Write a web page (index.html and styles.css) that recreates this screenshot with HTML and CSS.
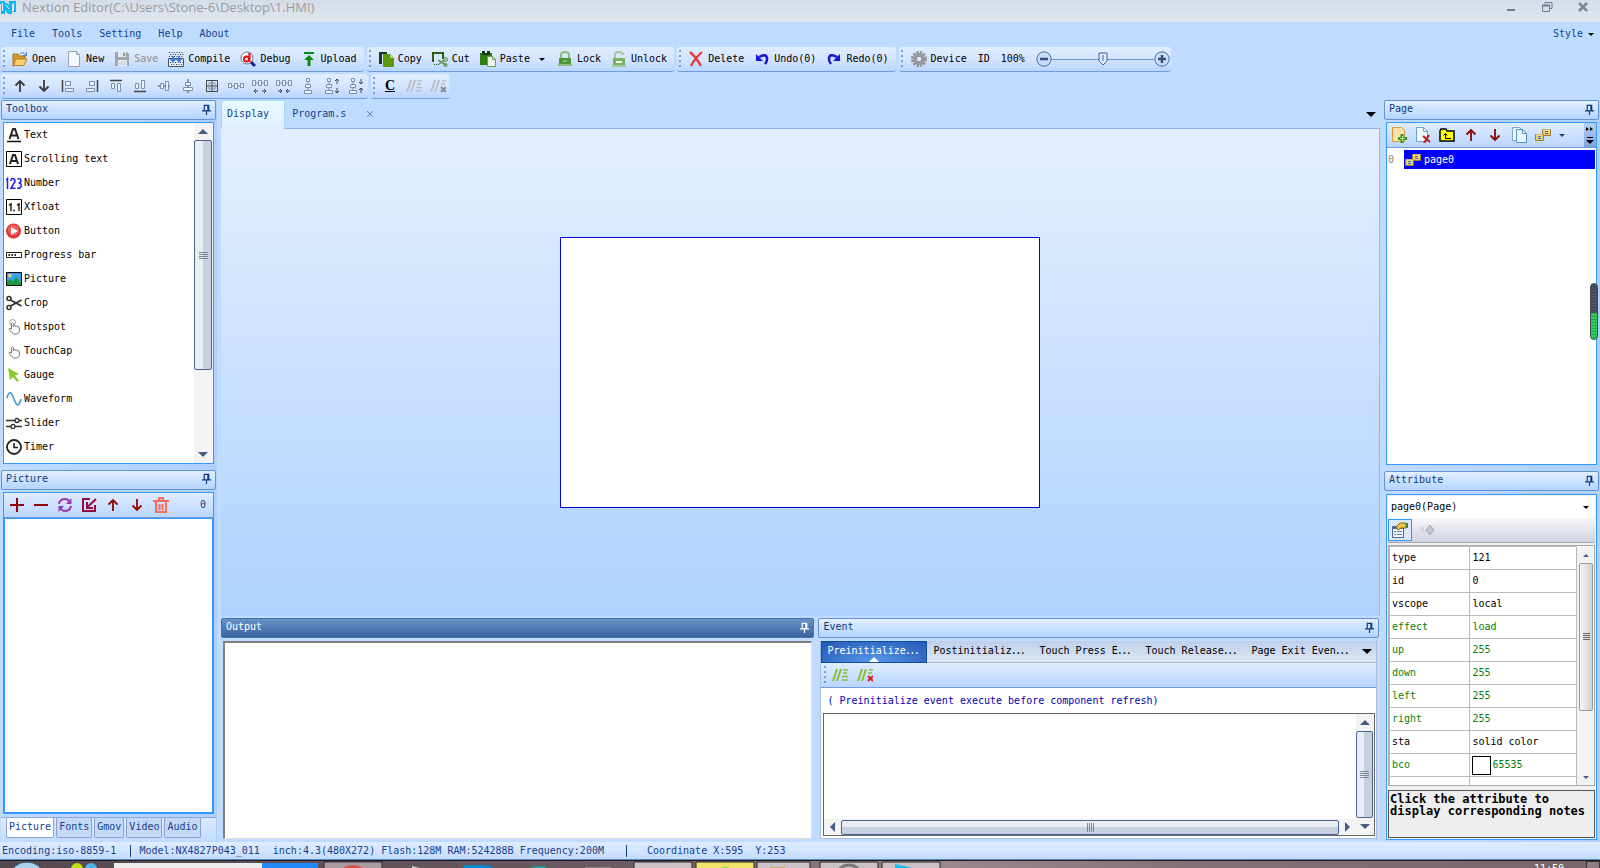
FILE: index.html
```html
<!DOCTYPE html>
<html lang="en">
<head>
<meta charset="utf-8">
<title>Nextion Editor</title>
<link rel="stylesheet" href="styles.css">
</head>
<body>
<svg class="defs" aria-hidden="true">
  <symbol id="pin" viewBox="0 0 10 12"><path d="M2.500 7V1.500h5V7M0 7.500h10M5 8v4M6.500 1v6" fill="none" stroke="currentColor" stroke-width="1.300"/></symbol>
  <symbol id="up" viewBox="0 0 16 16"><path d="M8 14V3M3.500 7.500 8 3l4.500 4.500" fill="none" stroke="currentColor" stroke-width="1.800"/></symbol>
  <symbol id="down" viewBox="0 0 16 16"><path d="M8 2v11M3.500 8.500 8 13l4.500-4.500" fill="none" stroke="currentColor" stroke-width="1.800"/></symbol>
  <symbol id="note" viewBox="0 0 16 16"><path d="M1 14 5 2M5 14 9 2" fill="none" stroke="currentColor" stroke-width="2"/><path d="M11 3h5M11 6h4M10 9.500h6M10 13h6" stroke="currentColor" stroke-width="1.500"/></symbol>
  <symbol id="unnote" viewBox="0 0 16 16"><path d="M1 14 5 2M5 14 9 2" fill="none" stroke="currentColor" stroke-width="2"/><path d="M12 3h4M11 6h4" stroke="currentColor" stroke-width="1.500"/><path d="m11 9 5 5m0-5-5 5" stroke="var(--x)" stroke-width="2"/></symbol>
  <symbol id="links" viewBox="0 0 16 16"><path d="M7.500 2.500h8v6h-8zM.5 7.500h8v6h-8z" fill="#ecd06a" stroke="#9a7d34"/><path d="M10 4.500h3M10 6.500h3M3 9.500h3M3 11.500h3" stroke="#3e6db5"/><path d="M8 3h7M1 8h7" stroke="#fbf0b8"/></symbol>
  <symbol id="hand" viewBox="0 0 16 16"><path d="M5.500 10V4.500q1-1.500 2 0V8V7q1.200-1 2 0v1V7.300q1.200-1 2 0v1V8q1.500-1 2 .5V12q-.5 3-3.500 3H7.500Q5.500 14 3 10q.5-1.500 2.500 0" fill="#fff" stroke="#777"/></symbol>
</svg>

<div class="app">
  <header class="titlebar">
    <svg class="logo" viewBox="0 0 16 16"><path d="M0 1h5v2h2l2 2V1h7v11h-3V4h-1v10H8l-3-4v4H1V4H0z" fill="#14b4f4"/><path d="M2.500 3v8M13.500 3v8M5.500 4.500 9 9" stroke="#dff4ff"/></svg>
    <h1>Nextion Editor(C:\Users\Stone-6\Desktop\1.HMI)</h1>
    <div class="winbtns">
      <button aria-label="Minimize"><svg viewBox="0 0 12 12"><path d="M2 9h8" stroke="#6b7d95" stroke-width="2"/></svg></button>
      <button aria-label="Restore"><svg viewBox="0 0 12 12"><path d="M4 3V1.500h7v6H9M1.500 4.500h7v6h-7z" fill="none" stroke="#6b7d95"/><path d="M1 4.500h8" stroke="#6b7d95" stroke-width="2"/></svg></button>
      <button aria-label="Close"><svg viewBox="0 0 12 12"><path d="m2 2 8 8m0-8-8 8" stroke="#76869b" stroke-width="2.500"/></svg></button>
    </div>
  </header>

  <nav class="menu">
    <button>File</button><button>Tools</button><button>Setting</button><button>Help</button><button>About</button>
    <button class="style">Style <i class="caret"></i></button>
  </nav>

  <div class="bars">
    <div class="bar">
      <i class="grip"></i>
      <button><svg viewBox="0 0 16 16"><path d="M1 3h5l1 2h6v3H5L2 15H1z" fill="#d99a2b" stroke="#a8731c"/><path d="M4 8h11l-3 6.500H1.500z" fill="#f8cf6c" stroke="#b9842a"/><path d="M8 3q3-3 6 1M14.500 1v3.500H11" fill="none" stroke="#5a7fa8"/></svg>Open</button>
      <button><svg viewBox="0 0 16 16"><path d="M2.500.5h8l3 3v12h-11z" fill="#f4f7fc" stroke="#9aa3b4"/><path d="M10.500.5v3h3" fill="#c9d3e6" stroke="#9aa3b4"/></svg>New</button>
      <button disabled><svg viewBox="0 0 16 16"><path d="M1 1h12l2 2v12H1z" fill="#a3a5a8"/><path d="M4 1h8v5H4zM4 9h9v6H4z" fill="#e4ebf5"/><path d="M9 2h2v3H9zM5 11h7M5 13h7" fill="#999" stroke="#aaa" stroke-width=".5"/></svg>Save</button>
      <button><svg viewBox="0 0 16 16"><path d="M.5 7.500h15v8H.5z" fill="#edf3fc" stroke="#456"/><path d="M1 1.500h14M2 3.500h14M1 5.500h14M2 11.500h13M3 13.500h12" stroke="#333b4c" stroke-dasharray="1 1.500"/><path d="M5 5v5M11 5v5M2.500 8 5 10.500 7.500 8M8.500 8l2.500 2.500L13.500 8" fill="none" stroke="#2874dc" stroke-width="1.500"/></svg>Compile</button>
      <button><svg viewBox="0 0 16 16"><circle cx="7" cy="7" r="6" fill="#fff" stroke="#68798e"/><path d="m11 11 4 4" stroke="#1a1a8c" stroke-width="3"/><circle cx="6.500" cy="8" r="2.500" fill="none" stroke="#e31212" stroke-width="2"/><path d="M9.500 2v9" stroke="#e31212" stroke-width="2.200"/></svg>Debug</button>
      <button><svg viewBox="0 0 16 16"><path d="M3 1h10v2H3zM8 4l5 5H9.500v6h-3V9H3z" fill="#078a0e"/></svg>Upload</button>
    </div>
    <div class="bar">
      <i class="grip"></i>
      <button><svg viewBox="0 0 16 16"><path d="M1 1h8v2H4v10H1z" fill="#123f24"/><path d="M5 3h7l4 4v9H5z" fill="#5c9a0b"/><path d="M12 3v4h4" fill="#b4d67b"/></svg>Copy</button>
      <button><svg viewBox="0 0 16 16"><path d="M1 11V2h10v6" fill="none" stroke="#285e13" stroke-width="2"/><path d="M2 13.500h5" stroke="#285e13" stroke-dasharray="1 1"/><path d="m6 9 8 5M14 8l-7 5" stroke="#65965a" stroke-width="1.500"/><circle cx="13.500" cy="8.500" r="2" fill="none" stroke="#50923d"/><circle cx="13.500" cy="14" r="1.500" fill="none" stroke="#50923d"/></svg>Cut</button>
      <button><svg viewBox="0 0 16 16"><path d="M0 2h12v12H0z" fill="#2e7f0d"/><path d="M2 0h8v4H2z" fill="#0d3b1b"/><path d="M5 0h2v2H5z" fill="#dce9ff"/><path d="M7.500 5.500h5l3 3v7h-8z" fill="#eff6ef" stroke="#6aa24e"/><path d="M12.500 5.500v3h3" fill="none" stroke="#6aa24e"/></svg>Paste</button><button class="drop" aria-label="Paste options"><i class="caret"></i></button>
      <button><svg viewBox="0 0 16 16"><path d="M4 8V4q0-3 4-3t4 3v4" fill="none" stroke="#8dbc7d" stroke-width="2"/><path d="M2 7h12v6H2z" fill="#4d9836"/><path d="M1 14h14" stroke="#91bc83" stroke-width="2"/><path d="M6 10h4" stroke="#a6d190"/></svg>Lock</button>
      <button><svg viewBox="0 0 16 16"><path d="M4 8V4q0-3 4-3t4 3" fill="none" stroke="#a6c99c" stroke-width="2"/><path d="M2 7h12v8H2z" fill="#76b35e"/><path d="M5 11h6" stroke="#fff" stroke-width="2"/><path d="M1 15h14" stroke="#a3c996" stroke-width="2"/></svg>Unlock</button>
    </div>
    <div class="bar">
      <i class="grip"></i>
      <button><svg viewBox="0 0 16 16"><path d="M2 1q6 5 11 14M14 1Q7 7 3 15" fill="none" stroke="#e23732" stroke-width="2.300"/></svg>Delete</button>
      <button><svg viewBox="0 0 16 16"><path d="M5 6q7-4 8 1 .5 3-2 6" fill="none" stroke="#1515dc" stroke-width="2.500"/><path d="M2 3v7h7z" fill="#1515dc"/></svg>Undo(0)</button>
      <button><svg viewBox="0 0 16 16"><path d="M11 6Q4 2 3 7q-.5 3 2 6" fill="none" stroke="#1515dc" stroke-width="2.500"/><path d="M14 3v7H7z" fill="#1515dc"/></svg>Redo(0)</button>
    </div>
    <div class="bar zoombar">
      <i class="grip"></i>
      <button><svg viewBox="0 0 16 16"><circle cx="8" cy="8" r="6.500" fill="none" stroke="#8d8f93" stroke-width="3" stroke-dasharray="2.200 1.200"/><circle cx="8" cy="8" r="4" fill="none" stroke="#96999d" stroke-width="4"/><circle cx="8" cy="8" r="2" fill="#e5eaf1"/></svg>Device</button>
      <button>ID</button>
      <label for="zoom">100%</label>
      <button class="round" aria-label="Zoom out"><svg viewBox="0 0 16 16"><circle cx="8" cy="8" r="7.200" fill="#c9dcf5" stroke="#4a6d9c"/><path d="M4 8h8" stroke="#34527d" stroke-width="2.500"/></svg></button><input id="zoom" type="range" min="0" max="200" value="100"><button class="round" aria-label="Zoom in"><svg viewBox="0 0 16 16"><circle cx="8" cy="8" r="7.200" fill="#c9dcf5" stroke="#4a6d9c"/><path d="M4 8h8M8 4v8" stroke="#34527d" stroke-width="2.500"/></svg></button>
    </div>
  </div>

  <div class="bars">
    <div class="bar tight">
      <i class="grip"></i>
      <button aria-label="Bring forward"><svg><use href="#up"/></svg></button>
      <button aria-label="Send backward"><svg><use href="#down"/></svg></button>
      <button aria-label="Align left"><svg viewBox="0 0 16 16"><path d="M2.500 2v12" stroke="#444" stroke-width="1.500"/><path d="M5.500 3.500h5v4h-5zM5.500 10.500h8v3h-8z" fill="#e8f1ff" stroke="#8090a8"/></svg></button>
      <button aria-label="Align right"><svg viewBox="0 0 16 16"><path d="M13.500 2v12" stroke="#444" stroke-width="1.500"/><path d="M5.500 3.500h5v4h-5zM2.500 10.500h8v3h-8z" fill="#e8f1ff" stroke="#8090a8"/></svg></button>
      <button aria-label="Align top"><svg viewBox="0 0 16 16"><path d="M2 2.500h12" stroke="#444" stroke-width="1.500"/><path d="M3.500 5.500h3v5h-3zM9.500 5.500h3v8h-3z" fill="#e8f1ff" stroke="#8090a8"/></svg></button>
      <button aria-label="Align bottom"><svg viewBox="0 0 16 16"><path d="M2 13.500h12" stroke="#444" stroke-width="1.500"/><path d="M3.500 5.500h3v5h-3zM9.500 2.500h3v8h-3z" fill="#e8f1ff" stroke="#8090a8"/></svg></button>
      <button aria-label="Align middle"><svg viewBox="0 0 16 16"><path d="M2 8h12" stroke="#444"/><path d="M4.500 5.500h3v5h-3zM9.500 3.500h3v9h-3z" fill="#e8f1ff" stroke="#8090a8"/></svg></button>
      <button aria-label="Align center"><svg viewBox="0 0 16 16"><path d="M8 1v14" stroke="#444"/><path d="M5.500 4.500h5v3h-5zM3.500 9.500h9v3h-9z" fill="#e8f1ff" stroke="#8090a8"/></svg></button>
      <button aria-label="Center in page"><svg viewBox="0 0 16 16"><path d="M2.500 2.500h11v11h-11zM8 2v12M2 8h12" fill="none" stroke="#444"/><path d="M5 5h6v6H5z" fill="none" stroke="#8090a8"/></svg></button>
      <button aria-label="Distribute horizontally"><svg viewBox="0 0 16 16"><path d="M0 8h16" stroke="#8090a8"/><path d="M.5 5.500h3v4h-3zM6.500 5.500h3v5h-3zM12.500 5.500h3v4h-3z" fill="#e8f1ff" stroke="#8090a8"/></svg></button>
      <button aria-label="Increase horizontal spacing"><svg viewBox="0 0 16 16"><path d="M0 5h16" stroke="#8090a8"/><path d="M.5 2.500h3v5h-3zM6.500 2.500h3v5h-3zM12.500 2.500h3v5h-3z" fill="#e8f1ff" stroke="#8090a8"/><path d="M2 13h4M10 13h4M4 11l-2 2 2 2M12 11l2 2-2 2" fill="none" stroke="#444"/></svg></button>
      <button aria-label="Decrease horizontal spacing"><svg viewBox="0 0 16 16"><path d="M0 5h16" stroke="#8090a8"/><path d="M.5 2.500h3v5h-3zM6.500 2.500h3v5h-3zM12.500 2.500h3v5h-3z" fill="#e8f1ff" stroke="#8090a8"/><path d="M2 13h4M10 13h4M4 11l2 2-2 2M12 11l-2 2 2 2" fill="none" stroke="#444"/></svg></button>
      <button aria-label="Distribute vertically"><svg viewBox="0 0 16 16"><path d="M8 0v16" stroke="#8090a8"/><path d="M6.500.5h3v3h-3zM5.500 6.500h5v3h-5zM4.500 12.500h7v3h-7z" fill="#e8f1ff" stroke="#8090a8"/></svg></button>
      <button aria-label="Increase vertical spacing"><svg viewBox="0 0 16 16"><path d="M5 0v16" stroke="#8090a8"/><path d="M3.500.5h3v3h-3zM2.500 6.500h5v3h-5zM1.500 12.500h7v3h-7z" fill="#e8f1ff" stroke="#8090a8"/><path d="M13 1v5M13 10v5M11 3l2-2 2 2M11 13l2 2 2-2" fill="none" stroke="#444"/></svg></button>
      <button aria-label="Decrease vertical spacing"><svg viewBox="0 0 16 16"><path d="M5 0v16" stroke="#8090a8"/><path d="M3.500.5h3v3h-3zM2.500 6.500h5v3h-5zM1.500 12.500h7v3h-7z" fill="#e8f1ff" stroke="#8090a8"/><path d="M13 1v5M13 10v5M11 4l2 2 2-2M11 12l2-2 2 2" fill="none" stroke="#444"/></svg></button>
    </div>
    <div class="bar tight">
      <i class="grip"></i>
      <button class="letter">C</button>
      <button class="gray" disabled aria-label="Comment"><svg><use href="#note"/></svg></button>
      <button class="gray" disabled aria-label="Uncomment"><svg><use href="#unnote"/></svg></button>
    </div>
  </div>

  <main>
    <aside class="side left">
      <h2 class="head">Toolbox<svg><use href="#pin"/></svg></h2>
      <section class="box toolbox">
        <ul>
          <li><button><svg viewBox="0 0 16 16"><path d="M3.500 12 7 2h2l3.500 10M5 8.500h6" fill="none" stroke="#222" stroke-width="2"/><path d="M1 14.500h14" stroke="#111" stroke-width="1.500"/></svg>Text</button></li>
          <li><button><svg viewBox="0 0 16 16"><path d="M.5.5h15v15H.5z" fill="#fff" stroke="#000"/><path d="M4 13 7 4h2l3 9M5 10h6" fill="none" stroke="#222" stroke-width="2"/></svg>Scrolling text</button></li>
          <li><button><svg viewBox="0 0 16 16"><path d="m0 5 1.500-1.500V14M5 6q0-3 2-2.500t2 3L5 13.200h4.500M11.500 4q3.500-1 3.500 1.500Q15 8 12.500 8q3 0 2.700 3-.7 3-4 2" fill="none" stroke="#1c1cf0" stroke-width="1.500"/></svg>Number</button></li>
          <li><button><svg viewBox="0 0 16 16"><path d="M.5.5h15v15H.5z" fill="#fff" stroke="#000"/><path d="m3 6 2-1v7M11 6l2-1v7M8 10.500v2" fill="none" stroke="#222" stroke-width="1.500"/></svg>Xfloat</button></li>
          <li><button><svg viewBox="0 0 16 16"><circle cx="7.500" cy="8" r="7.500" fill="#df3131"/><circle cx="7.500" cy="7" r="5.500" fill="#ef5d55"/><path d="m5 4 7 4-7 4z" fill="#fff"/></svg>Button</button></li>
          <li><button><svg viewBox="0 0 16 16"><path d="M.5 5.500h15v5H.5z" fill="#fff" stroke="#222"/><path d="M2.500 8H10" stroke="#222" stroke-width="2" stroke-dasharray="1.500 1.500"/></svg>Progress bar</button></li>
          <li><button><svg viewBox="0 0 16 16"><path d="M.5 1.500h15v13H.5z" fill="#39a2ed" stroke="#000"/><path d="M1 11 4 8l3 3 3-5 5 6v2H1z" fill="#1c9a33"/><circle cx="4" cy="4.500" r="1.800" fill="#f5d37b"/></svg>Picture</button></li>
          <li><button><svg viewBox="0 0 16 16"><circle cx="3" cy="3.500" r="2" fill="none" stroke="#333" stroke-width="1.600"/><circle cx="3" cy="12.500" r="2" fill="none" stroke="#333" stroke-width="1.600"/><path d="m4.500 5 11 6M4.500 11l11-6" stroke="#333" stroke-width="1.800"/></svg>Crop</button></li>
          <li><button><svg viewBox="0 0 16 16"><use href="#hand"/><circle cx="6.500" cy="3.500" r="3" fill="none" stroke="#999"/></svg>Hotspot</button></li>
          <li><button><svg><use href="#hand"/></svg>TouchCap</button></li>
          <li><button><svg viewBox="0 0 16 16"><path d="m2 1 11 6-4 1.500 4 5-2 1.500-4-5-3 3z" fill="#8cc832"/></svg>Gauge</button></li>
          <li><button><svg viewBox="0 0 16 16"><path d="M1 7Q4-4 8 8t7 0" fill="none" stroke="#3f92c4" stroke-width="1.500"/></svg>Waveform</button></li>
          <li><button><svg viewBox="0 0 16 16"><path d="M0 5.500h9M13 5.500h3M0 11.500h5M9 11.500h7" stroke="#333" stroke-width="1.500"/><circle cx="11" cy="5.500" r="2" fill="#fff" stroke="#333" stroke-width="1.300"/><circle cx="7" cy="11.500" r="2" fill="#fff" stroke="#333" stroke-width="1.300"/></svg>Slider</button></li>
          <li><button><svg viewBox="0 0 16 16"><circle cx="8" cy="8" r="7" fill="#fff" stroke="#222" stroke-width="1.800"/><path d="M8 4v4.500h4" fill="none" stroke="#222" stroke-width="1.600"/></svg>Timer</button></li>
        </ul>
        <div class="vscroll"><i class="tri-up"></i><i class="thumb t68"></i><i class="space"></i><i class="tri-down"></i></div>
      </section>
      <h2 class="head">Picture<svg><use href="#pin"/></svg></h2>
      <section class="box pics">
        <div class="mini red">
          <button aria-label="Add"><svg viewBox="0 0 16 16"><path d="M8 1v14M1 8h14" stroke="currentColor" stroke-width="2"/></svg></button>
          <button aria-label="Remove"><svg viewBox="0 0 16 16"><path d="M1 8h14" stroke="currentColor" stroke-width="2"/></svg></button>
          <button aria-label="Replace"><svg viewBox="0 0 16 16"><path d="M2 7q1-5 6-5 3 0 5 3M14 9q-1 5-6 5-3 0-5-3" fill="none" stroke="#9b3aaf" stroke-width="2"/><path d="M14.500 1v6H9zM1.500 15V9H7z" fill="#9b3aaf"/></svg></button>
          <button aria-label="Insert"><svg viewBox="0 0 16 16"><path d="M9 2H2v12h12V8" fill="none" stroke="#970b40" stroke-width="2"/><path d="M15 2 7 9.500M6 5v6h6" fill="none" stroke="#970b40" stroke-width="2"/></svg></button>
          <button aria-label="Move up"><svg><use href="#up"/></svg></button>
          <button aria-label="Move down"><svg><use href="#down"/></svg></button>
          <button aria-label="Delete all"><svg viewBox="0 0 16 16"><path d="M0 4h16M6 3V1h4v2M3 5v10h10V5M6.500 7v6M9.500 7v6" fill="none" stroke="#ff6a55" stroke-width="2"/></svg></button>
          <span class="count">0</span>
        </div>
        <div class="piclist"></div>
      </section>
      <div class="foot"><button class="on">Picture</button><button>Fonts</button><button>Gmov</button><button>Video</button><button>Audio</button></div>
    </aside>

    <div class="center">
      <div class="doctabs"><button class="on">Display</button><button>Program.s <svg viewBox="0 0 8 8"><path d="m1 1 6 6m0-6L1 7" stroke="#5c83b8"/></svg></button><button class="more" aria-label="Open documents"><i class="caret big"></i></button></div>
      <div class="stage"><div class="screen"></div></div>
      <div class="docks">
        <section class="dock out">
          <h2 class="head dark">Output<svg><use href="#pin"/></svg></h2>
          <textarea class="output" aria-label="Output"></textarea>
        </section>
        <section class="dock event">
          <h2 class="head">Event<svg><use href="#pin"/></svg></h2>
          <div class="eventbox">
            <div class="evtabs"><button class="on">Preinitialize<span>⋯</span></button><button>Postinitializ<span>⋯</span></button><button>Touch Press E<span>⋯</span></button><button>Touch Release<span>⋯</span></button><button>Page Exit Even<span>⋯</span></button><i class="caret big"></i></div>
            <div class="evbar"><i class="grip"></i><button aria-label="Comment"><svg><use href="#note"/></svg></button><button aria-label="Uncomment"><svg><use href="#unnote"/></svg></button></div>
            <label for="code">( Preinitialize event execute before component refresh)</label>
            <div class="codebox">
              <textarea id="code"></textarea>
              <div class="vscroll"><i class="tri-up"></i><i class="thumb full"></i><i class="tri-down"></i></div>
              <div class="hscroll"><i class="tri-left"></i><i class="thumb full"></i><i class="tri-right"></i></div>
            </div>
          </div>
        </section>
      </div>
    </div>

    <aside class="side right">
      <h2 class="head">Page<svg><use href="#pin"/></svg></h2>
      <section class="box pages">
        <div class="mini red">
          <button aria-label="Add page"><svg viewBox="0 0 16 16"><path d="M1.500.5h9l3 3v11h-12z" fill="#ffe1a7" stroke="#d79a3d"/><path d="M11 7v9M7 11.500h9" stroke="#2f9320" stroke-width="3"/><path d="M11.500 9v5M9 11.500h5" stroke="#c5f0a8"/></svg></button>
          <button aria-label="Delete page"><svg viewBox="0 0 16 16"><path d="M1.500.5h7l4 4v10h-11z" fill="#eff7ff" stroke="#6ba6cf"/><path d="M8.500.5v4h4" fill="none" stroke="#6ba6cf"/><path d="m8 9 7 6m-1-7-5 8" stroke="#c22020" stroke-width="2"/></svg></button>
          <button aria-label="Folder"><svg viewBox="0 0 16 16"><path d="M1 14V4l1-2h5l1 2h7v10z" fill="#ff0" stroke="#000" stroke-width="1.500"/><path d="M12 11.500H6.500V7M4.500 8.500l2-2 2 2" fill="none" stroke="#000"/></svg></button>
          <button aria-label="Move page up"><svg><use href="#up"/></svg></button>
          <button aria-label="Move page down"><svg><use href="#down"/></svg></button>
          <button aria-label="Copy page"><svg viewBox="0 0 16 16"><path d="M1.500.5h7l2 2v11h-9z" fill="#f0f8ff" stroke="#76a8cc"/><path d="M5.500 2.500h6l4 4v9h-10z" fill="#e8f5ff" stroke="#5793bf"/><path d="M11.500 2.500v4h4" fill="none" stroke="#5793bf"/></svg></button>
          <button aria-label="Links"><svg><use href="#links"/></svg></button>
          <button class="drop" aria-label="Link options"><i class="caret"></i></button>
          <button class="over" aria-label="More"><svg viewBox="0 0 8 20"><path d="M0 2l3 2-3 2zM4 2l3 2-3 2zM1 12h6v1H1zM0 15h8l-4 4z"/></svg></button>
        </div>
        <div class="pagerow"><span>0</span><button><svg><use href="#links"/></svg>page0</button></div>
      </section>
      <h2 class="head">Attribute<svg><use href="#pin"/></svg></h2>
      <section class="box attrs">
        <div class="pick"><select aria-label="Component"><option>page0(Page)</option></select><i class="caret"></i></div>
        <div class="propbar">
          <button class="on" aria-label="Properties"><svg viewBox="0 0 16 16"><path d="M.5 4.500h11v11H.5z" fill="#f4f8ff" stroke="#456a9c"/><path d="M1 6h10" stroke="#456a9c" stroke-width="2"/><path d="M2 9.500h2M5 9.500h5M2 12.500h2M5 12.500h5" stroke="#5d82b8"/><path d="m4 5 4-4h6v5H9L6 8z" fill="#ecc145" stroke="#8a6a19"/><path d="M14 1h2v5h-2z" fill="#31883c"/></svg></button>
          <button disabled aria-label="Events"><svg viewBox="0 0 16 16"><path d="m6 8 4-5 4 5-4 5z" fill="#c3c6cc" stroke="#a7aab1"/><path d="M1 6h3M0 8h4M1 10h4" stroke="#c6c9cf"/></svg></button>
        </div>
        <div class="tablewrap">
          <div class="clip"><table>
            <tr><th>type</th><td>121</td></tr>
            <tr><th>id</th><td>0</td></tr>
            <tr><th>vscope</th><td>local</td></tr>
            <tr class="g"><th>effect</th><td>load</td></tr>
            <tr class="g"><th>up</th><td>255</td></tr>
            <tr class="g"><th>down</th><td>255</td></tr>
            <tr class="g"><th>left</th><td>255</td></tr>
            <tr class="g"><th>right</th><td>255</td></tr>
            <tr><th>sta</th><td>solid color</td></tr>
            <tr class="g"><th>bco</th><td><div class="swatch"><i></i>65535</div></td></tr>
            <tr><th></th><td></td></tr>
          </table></div>
          <div class="vscroll plain"><i class="tri-up"></i><i class="thumb t70"></i><i class="space"></i><i class="tri-down"></i></div>
        </div>
        <p class="hint">Click the attribute to display corresponding notes</p>
      </section>
    </aside>
    <i class="gauge"></i>
  </main>

  <footer class="status"><span>Encoding:iso-8859-1</span><i></i><span>Model:NX4827P043_011</span><span class="spec">inch:4.3(480X272) Flash:128M RAM:524288B Frequency:200M</span><i></i><span class="coord">Coordinate X:595&nbsp; Y:253</span></footer>
  <div class="taskbar">
    <svg viewBox="0 0 960 8"><ellipse cx="27" cy="14" rx="16" ry="13" fill="#a9d3ea" stroke="#3c5870"/><circle cx="77" cy="8" r="6" fill="#bfe010"/><circle cx="91" cy="8" r="6" fill="#4db2f0"/><path d="M114 2h148v6H114z" fill="#ececec"/><path d="M262 2h56v6h-56z" fill="#2089fa"/><path d="M324 1h58v7h-58z" fill="#a99ca2" stroke="#2d2529"/><ellipse cx="353" cy="12" rx="12" ry="8" fill="#dc5145"/><path d="m412 5 12 3h-12z" fill="#ccc"/><path d="m461 8 4-4h24l4 4z" fill="#0a87cc"/><ellipse cx="539" cy="12" rx="12" ry="7" fill="#15a5aa"/><path d="M585 6h26v2h-26z" fill="#8b8488"/><path d="M634 1h58v7h-58zM757 1h53v7h-53zM820 1h58v7h-58zM882 1h58v7h-58z" fill="#cbc2c8" stroke="#2d2529"/><path d="M696 1h58v7h-58z" fill="#f0e468" stroke="#2d2529"/><ellipse cx="725" cy="10" rx="8" ry="4" fill="#8bd84d"/><path d="M770 6h15v2h-15z" fill="#c3ad6a"/><ellipse cx="849" cy="11" rx="10" ry="7" fill="none" stroke="#777" stroke-width="3"/><path d="m895 3 22 5h-22z" fill="#11bdf7"/></svg>
    <time>11:50</time><button aria-label="Show desktop"></button>
  </div>
</div>
</body>
</html>
```

FILE: styles.css
```css
* { box-sizing: border-box; }
body { margin: 0; font: 10px/12px "DejaVu Sans Mono", "Liberation Mono", monospace; color: #000; background: #bfdbff; }
button { font: inherit; color: inherit; background: none; border: 0; padding: 0; margin: 0; white-space: nowrap; }
h1, h2, p, ul { margin: 0; padding: 0; font: inherit; }
ul { list-style: none; }
i { display: block; }
svg { width: 16px; height: 16px; flex: none; display: block; }
.defs { position: absolute; width: 0; height: 0; }
.app { height: 100vh; display: flex; flex-direction: column; overflow: hidden; }

.titlebar { height: 22px; flex: none; display: flex; align-items: flex-start; gap: 6px; background: linear-gradient(#d5dde8, #e0e5ed); }
.titlebar h1 { flex: 1; font: 13px/15px "Open Sans", "Noto Sans", sans-serif; color: #9b9b9b; }
.winbtns { display: flex; gap: 24px; padding: 1px 11px 0 0; }
.winbtns svg { width: 12px; height: 12px; }

.menu { height: 24px; flex: none; display: flex; align-items: center; gap: 17px; padding: 0 6px 0 11px; color: #15428b; }
.menu .style { margin-left: auto; display: flex; align-items: center; gap: 5px; }
.caret { width: 0; height: 0; border: 3px solid transparent; border-top-color: #000; border-bottom: 0; }
.caret.big { border-width: 5px; border-bottom: 0; }

.bars { flex: none; display: flex; gap: 3px; margin: 1px 0 1px 1px; }
.bar { height: 25px; display: flex; align-items: center; gap: 10px; padding: 0 7px 0 2px; background: linear-gradient(#e0edff, #d5e5ff 50%, #b9d5ff); border-bottom: 1px solid #6f9dd9; border-radius: 3px; }
.bar button { display: flex; align-items: center; gap: 4px; }
.bar button:disabled { color: #8d8d8d; }
.grip { width: 2px; height: 18px; background: repeating-linear-gradient(#6fa0dc 0 2px, transparent 2px 5px); margin-right: -3px; flex: none; }
.bar .drop { width: 6px; margin: 0 2px 0 -1px; }
.zoombar { gap: 11px; }
.bar .round { margin: 0 -11px 0 0; }
.bar .round:last-child { margin: 0 -6px 0 -11px; }
.bar input { width: 102px; height: 16px; margin: 0; appearance: none; background: linear-gradient(#6593cf, #6593cf) center / 100% 1px no-repeat; }
.bar input::-webkit-slider-thumb { appearance: none; width: 10px; height: 14px; background: url("data:image/svg+xml,%3Csvg xmlns='http://www.w3.org/2000/svg' viewBox='0 0 10 14'%3E%3Cpath d='M1 1h8v8l-4 4-4-4z' fill='%23e3efff' stroke='%233f6496'/%3E%3Cpath d='M5 3v6' stroke='%233f6496'/%3E%3C/svg%3E"); }
.bar.tight { gap: 8px; padding-right: 4px; color: #3c3c3c; }
.bar.tight .grip { margin-right: -1px; }
.bar .letter { width: 16px; justify-content: center; font: bold 14px/16px "Liberation Serif", serif; color: #000; text-decoration: underline; }
.gray { --x: #8a8a8a; }
.bar .gray:disabled { color: #b9bdc4; }

main { flex: 1; min-height: 0; display: flex; position: relative; }
.side { display: flex; flex-direction: column; background: linear-gradient(90deg, #bfdbff, #afd0ff); }
.left { width: 217px; padding: 0 1px; }
.right { width: 217px; margin-left: 3px; padding: 0 1px 2px; }
.head { height: 20px; flex: none; display: flex; align-items: center; justify-content: space-between; padding: 0 4px 2px; color: #0f3a7c; background: linear-gradient(#e3efff, #b4d4ff); border: 1px solid #6593cf; border-radius: 2px; }
.head svg { width: 9px; height: 11px; }
.head.dark { color: #fff; background: linear-gradient(#6a93c9, #3a62a0); border-color: #4570ae; }
.box { border: 1px solid #3399ff; background: #fff; margin: 2px 2px 6px; min-height: 0; overflow: hidden; }

.toolbox { flex: 343 1 0; display: flex; }
.toolbox ul { flex: 1; }
.toolbox li { height: 24px; }
.toolbox button { display: flex; align-items: center; gap: 2px; height: 24px; padding-left: 2px; }

.vscroll { width: 19px; flex: none; display: flex; flex-direction: column; align-items: center; background: #f3f3f3; padding: 6px 1px 6px 0; gap: 6px; }
.vscroll .thumb { width: 100%; background: repeating-linear-gradient(#7d8797 0 1px, transparent 1px 2px) center / 9px 7px no-repeat, linear-gradient(90deg, #eaedf2 0 50%, #c6d0df 50%); border: 1px solid #4c6596; border-radius: 2px; }
.hscroll { height: 16px; flex: 1; display: flex; align-items: center; gap: 6px; padding: 0 6px; background: #f3f3f3; }
.hscroll .thumb { height: 15px; background: repeating-linear-gradient(90deg, #7d8797 0 1px, transparent 1px 2px) center / 7px 9px no-repeat, linear-gradient(#eaedf2 0 50%, #c6d0df 50%); border: 1px solid #4c6596; border-radius: 2px; }
.thumb.full, .space { flex: 1; }
.thumb.t68 { flex: 230; }
.t68 + .space { flex: 70; }
.thumb.t70 { flex: 150; }
.t70 + .space { flex: 54; }
.tri-up, .tri-down, .tri-left, .tri-right { width: 0; height: 0; border: 5px solid transparent; flex: none; }
.tri-up { border-bottom-color: #465a87; border-top: 0; }
.tri-down { border-top-color: #465a87; border-bottom: 0; }
.tri-left { border-right-color: #465a87; border-left: 0; }
.tri-right { border-left-color: #465a87; border-right: 0; }
.plain .tri-up, .plain .tri-down { border-left-width: 3px; border-right-width: 3px; border-bottom-width: 3px; border-top-width: 0; }
.plain .tri-down { border-top-width: 3px; border-bottom-width: 0; }
.vscroll.plain .thumb { border-color: #999; background: repeating-linear-gradient(#666 0 1px, transparent 1px 2px) center / 7px 8px no-repeat, linear-gradient(90deg, #f6f6f6, #d0d1d4); }

.pics { flex: 323 1 0; display: flex; flex-direction: column; margin-bottom: 3px; }
.mini { height: 25px; flex: none; display: flex; align-items: center; gap: 8px; padding-left: 5px; background: linear-gradient(#e0edff, #b9d5ff); border-bottom: 1px solid #6f9dd9; }
.red { color: #8f0404; }
.count { margin-left: auto; padding-right: 7px; color: #15428b; }
.piclist { flex: 1; border: 1px solid #3399ff; }
.foot { height: 25px; flex: none; display: flex; align-items: flex-start; gap: 2px; padding-left: 5px; border-top: 1px solid #8aa9d8; background: linear-gradient(#dceaff, #bfdbff); }
.foot button { height: 20px; padding: 0 2px 2px; color: #15428b; background: #c3d9f6; border: 1px solid #8ba3cd; border-top: 0; border-radius: 0 0 2px 2px; }
.foot .on { background: #fff; }

.center { flex: 1; min-width: 0; display: flex; flex-direction: column; margin-left: 4px; }
.doctabs { height: 29px; flex: none; display: flex; color: #15428b; border-bottom: 1px solid #8db8ee; }
.doctabs button { display: flex; align-items: center; gap: 20px; padding: 0 7px; }
.doctabs svg { width: 8px; height: 8px; }
.doctabs .on { padding: 0 15px 2px 5px; margin-bottom: -1px; background: linear-gradient(#e9fbff, #dfeeff); border: 1px solid #a4d9f2; border-bottom: 0; border-radius: 2px 2px 0 0; }
.doctabs .more { margin-left: auto; padding: 0 4px; }
.stage { flex: 1; min-height: 0; display: flex; justify-content: center; align-items: center; background: linear-gradient(#e3efff, #afd2ff); border-right: 1px solid #8db8ee; }
.screen { width: 41.4%; aspect-ratio: 480 / 271; background: #fff; border: 1px solid #0000e0; }
.docks { flex: none; height: 226px; display: flex; gap: 4px; padding: 2px 1px 3px 0; }
.dock { display: flex; flex-direction: column; min-width: 0; }
.out { flex: 594; }
.event { flex: 561; }
.output { flex: 1; margin: 3px 2px 0; resize: none; border: 1px solid #ddd; border-top: 2px solid #808080; border-left: 2px solid #808080; }
.eventbox { flex: 1; display: flex; flex-direction: column; margin: 3px 2px 0; background: #fff; border: 1px solid #a9bfdc; border-top: 0; }
.evtabs { height: 22px; flex: none; display: flex; align-items: center; background: linear-gradient(#bdd0ea, #dde6f3); border-bottom: 1px solid #a9bbd2; }
.evtabs button { flex: 0 1 106px; height: 22px; padding: 0 0 4px 6px; text-align: left; position: relative; overflow: hidden; }
.evtabs span { font: 12px/12px "Noto Sans CJK SC", sans-serif; }
.evtabs .on { color: #fff; background: radial-gradient(ellipse at 50% 100%, #5a97ea, #2359b5); border: 1px solid #164a9c; padding-left: 5px; }
.evtabs .on::after { content: ""; position: absolute; left: 50%; bottom: 0; margin-left: -5px; border: 5px solid transparent; border-bottom-color: #fff; border-top: 0; }
.evtabs .caret { margin: 0 4px 0 auto; }
.evbar { height: 25px; flex: none; display: flex; align-items: center; gap: 9px; padding-left: 3px; color: #86bf33; --x: #e02020; background: linear-gradient(#e0edff, #b9d5ff); border-bottom: 1px solid #6f9dd9; }
.eventbox label { flex: none; padding: 7px 6px 6px; color: #0000b4; }
.codebox { flex: 1; margin: 0 1px 2px 2px; min-height: 0; border: 1px solid #666; display: grid; grid-template: 1fr 16px / 1fr 18px; }
.codebox textarea { border: 0; resize: none; width: 100%; height: 100%; }
.codebox .vscroll { grid-row: 1 / 3; grid-column: 2; width: auto; }
.codebox .hscroll { grid-row: 2; grid-column: 1; }

.pages { flex: 345 1 0; }
.pages .mini { padding-left: 4px; }
.mini .drop .caret { border-top-color: #15428b; }
.mini .over { margin-left: auto; width: 12px; height: 24px; display: flex; justify-content: center; align-items: center; background: linear-gradient(#b6d0f5, #7fa5dc); }
.over svg { width: 8px; height: 20px; }
.pagerow { display: flex; align-items: center; height: 19px; margin-top: 2px; padding: 0 1px; color: #888; }
.pagerow span { width: 16px; }
.pagerow button { flex: 1; height: 19px; display: flex; align-items: center; gap: 3px; padding-left: 1px; color: #fff; background: #00f; }
.attrs { flex: 346 1 0; display: flex; flex-direction: column; margin-top: 3px; margin-bottom: 0; background: #f0f0f0; padding: 1px; }
.pick { height: 22px; flex: none; display: flex; align-items: center; background: #fff; }
.pick select { flex: 1; height: 20px; appearance: none; border: 0; background: transparent; font: inherit; padding: 0 3px; }
.pick .caret { margin-right: 6px; }
.propbar { height: 25px; flex: none; display: flex; align-items: center; gap: 4px; background: linear-gradient(#f8f8fb, #cfd2de); border-bottom: 1px solid #a8a8a8; }
.propbar button { width: 24px; height: 22px; display: grid; place-items: center; }
.propbar .on { border: 1px solid #3399ff; background: #dbe9fb; }
.tablewrap { flex: 1; min-height: 0; display: flex; margin-top: 2px; border: 1px solid #aaa; background: #f0f0f0; }
.clip { flex: 1; overflow: hidden; }
table { width: 100%; border-collapse: collapse; table-layout: fixed; background: #fff; }
th, td { height: 23px; padding: 0 2px; border: 1px solid #bbb; font-weight: normal; text-align: left; }
th { width: 43%; }
.g { color: #078007; }
.swatch { display: flex; align-items: center; gap: 1px; }
.swatch i { width: 19px; height: 19px; border: 1px solid #000; background: #fff; }
.tablewrap .vscroll { width: 16px; margin-left: 1px; padding: 8px 1px 6px; }
.hint { height: 48px; flex: none; margin-top: 4px; padding: 2px 1px; border: 1px solid #555; background: #eee; font: bold 12px/12px "DejaVu Sans Mono", monospace; }
.gauge { position: absolute; right: 2px; top: 183px; width: 8px; height: 57px; border-radius: 4px; border: 1px solid #444a52; background: repeating-linear-gradient(transparent 0 2px, #0003 2px 3px), linear-gradient(#4e555e 0 52%, #2fd05a 52%); }

.status { height: 18px; flex: none; display: flex; align-items: center; padding: 0 2px; color: #15428b; background: linear-gradient(#e0edff, #c3dbff); border-bottom: 1px solid #5b86bf; white-space: pre; overflow: hidden; }
.status i { width: 1px; height: 12px; background: #15428b; margin: 0 8px 0 14px; }
.status .spec { margin-left: 13px; }
.status .spec + i { margin: 0 20px 0 22px; }
.taskbar { height: 8px; flex: none; display: flex; align-items: flex-start; justify-content: space-between; overflow: hidden; border-top: 1px solid #1d1b20; background: linear-gradient(90deg, #54474d, #685a60 600px, #9a878b 950px, #827074 1200px, #776569); }
.taskbar svg { width: 960px; height: 8px; }
.taskbar time { margin-left: auto; margin-right: 22px; padding-top: 2px; color: #fff; }
.taskbar button { width: 14px; height: 8px; background: #8c8085; border: 1px solid #3a3236; }
```
